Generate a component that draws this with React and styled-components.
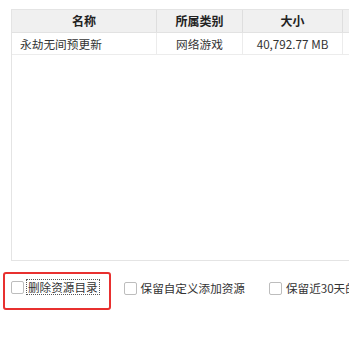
import React from "react";
import styled, { createGlobalStyle } from "styled-components";

const Global = createGlobalStyle`
  html, body { margin: 0; padding: 0; background: #fff; overflow: hidden; }
  body { font-family: "Microsoft YaHei", "Noto Sans CJK SC", "Noto Sans", sans-serif; font-size: 12px; color: #333; }
`;

const Page = styled.div`
  width: 349px;
  height: 337px;
  padding: 9px 0 0 11px;
  box-sizing: border-box;
  display: flex;
  flex-direction: column;
`;

const Table = styled.div`
  width: 420px;
  height: 252px;
  border: 1px solid #e4e4e4;
  box-sizing: border-box;
  display: flex;
  flex-direction: column;
`;

const Row = styled.div`
  display: grid;
  grid-template-columns: 145px 86px 100px 88px;
  height: ${(p) => (p.$head ? "22px" : "21px")};
  background: ${(p) => (p.$head ? "#f0f0f0" : "#fff")};
  border-bottom: 1px solid ${(p) => (p.$head ? "#e2e2e2" : "#ececec")};
  font-weight: ${(p) => (p.$head ? 700 : 400)};
  color: ${(p) => (p.$head ? "#222" : "#333")};
`;

const Cell = styled.div`
  display: flex;
  align-items: center;
  justify-content: ${(p) => (p.$align === "left" ? "flex-start" : "center")};
  padding-left: ${(p) => (p.$align === "left" ? "8px" : "0")};
  border-right: 1px solid ${(p) => (p.$head ? "#dedede" : "#ececec")};
  white-space: nowrap;
  overflow: hidden;
  line-height: 1;
  font-size: ${(p) => (p.$head ? "12px" : "11.7px")};
`;

const Options = styled.div`
  display: flex;
  align-items: center;
  margin-top: 11px;
  margin-left: -8px;
  height: 38px;
`;

const Option = styled.label`
  display: flex;
  align-items: center;
  gap: 3px;
  height: 38px;
  box-sizing: border-box;
  padding: 0 ${(p) => (p.$highlight ? "10px" : "0")} 0 ${(p) => (p.$highlight ? "6px" : "0")};
  margin-right: ${(p) => p.$gap}px;
  border: ${(p) => (p.$highlight ? "2px solid #e8302f" : "none")};
  border-radius: 3px;
  white-space: nowrap;
  color: #333;
  font-size: 11.6px;
  padding-bottom: ${(p) => (p.$highlight ? "8px" : "6px")};
  padding-top: 0;
`;

const Box = styled.span`
  width: 11px;
  height: 11px;
  border: 1px solid #bdbdbd;
  border-radius: 2px;
  background: #fff;
  flex: none;
`;

const Text = styled.span`
  line-height: 14px;
  outline: ${(p) => (p.$focus ? "1px dotted #555" : "none")};
  outline-offset: 0;
  padding: 0 1px;
`;

export default function App() {
  return (
    <>
      <Global />
      <Page>
        <Table>
          <Row $head>
            <Cell $head>名称</Cell>
            <Cell $head>所属类别</Cell>
            <Cell $head>大小</Cell>
            <Cell $head></Cell>
          </Row>
          <Row>
            <Cell $align="left">永劫无间预更新</Cell>
            <Cell>网络游戏</Cell>
            <Cell>40,792.77 MB</Cell>
            <Cell></Cell>
          </Row>
        </Table>
        <Options>
          <Option $highlight $gap={13}>
            <Box />
            <Text $focus>删除资源目录</Text>
          </Option>
          <Option $gap={23}>
            <Box />
            <Text>保留自定义添加资源</Text>
          </Option>
          <Option $gap={0}>
            <Box />
            <Text>保留近30天的资源</Text>
          </Option>
        </Options>
      </Page>
    </>
  );
}
